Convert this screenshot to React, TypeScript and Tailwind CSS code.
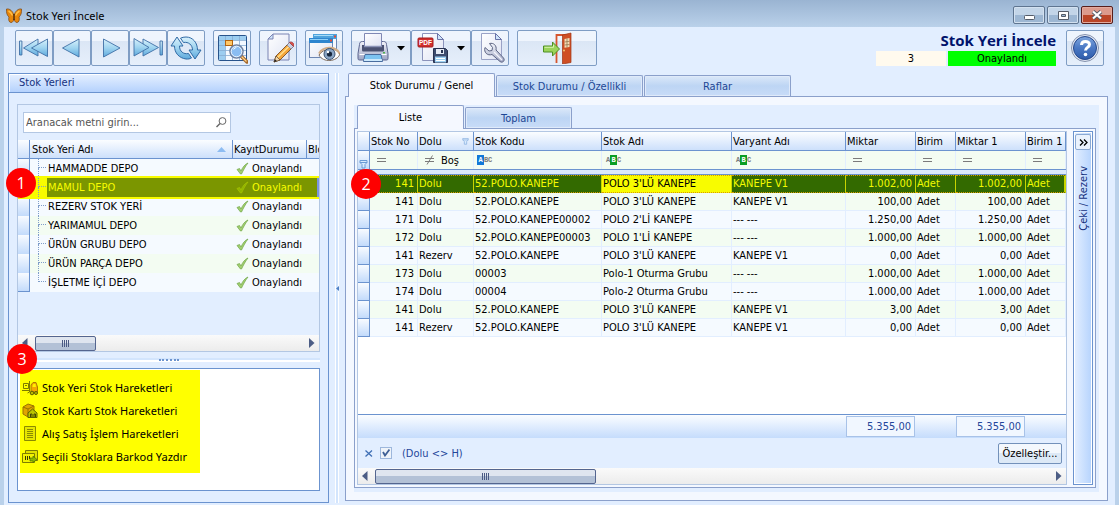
import React, { useState } from 'react';

interface Depot {
  name: string;
  status: string;
}

interface StockRow {
  no: string;
  state: string;
  code: string;
  name: string;
  variant: string;
  qty: string;
}

const depots: Depot[] = [
  { name: 'HAMMADDE DEPO', status: 'Onaylandı' },
  { name: 'MAMUL DEPO', status: 'Onaylandı' },
  { name: 'REZERV STOK YERİ', status: 'Onaylandı' },
  { name: 'YARIMAMUL DEPO', status: 'Onaylandı' },
  { name: 'ÜRÜN GRUBU DEPO', status: 'Onaylandı' },
  { name: 'ÜRÜN PARÇA DEPO', status: 'Onaylandı' },
  { name: 'İŞLETME İÇİ DEPO', status: 'Onaylandı' },
];

const rows: StockRow[] = [
  { no: '141', state: 'Dolu', code: '52.POLO.KANEPE', name: "POLO 3'LÜ KANEPE", variant: 'KANEPE V1', qty: '1.002,00' },
  { no: '141', state: 'Dolu', code: '52.POLO.KANEPE', name: "POLO 3'LÜ KANEPE", variant: 'KANEPE V1', qty: '100,00' },
  { no: '171', state: 'Dolu', code: '52.POLO.KANEPE00002', name: "POLO 2'Lİ KANEPE", variant: '--- ---', qty: '1.250,00' },
  { no: '172', state: 'Dolu', code: '52.POLO.KANEPE00003', name: "POLO 1'Lİ KANEPE", variant: '--- ---', qty: '1.000,00' },
  { no: '141', state: 'Rezerv', code: '52.POLO.KANEPE', name: "POLO 3'LÜ KANEPE", variant: 'KANEPE V1', qty: '0,00' },
  { no: '173', state: 'Dolu', code: '00003', name: 'Polo-1 Oturma Grubu', variant: '--- ---', qty: '1.000,00' },
  { no: '174', state: 'Dolu', code: '00004', name: 'Polo-2 Oturma Grubu', variant: '--- ---', qty: '1.000,00' },
  { no: '141', state: 'Dolu', code: '52.POLO.KANEPE', name: "POLO 3'LÜ KANEPE", variant: 'KANEPE V1', qty: '3,00' },
  { no: '141', state: 'Rezerv', code: '52.POLO.KANEPE', name: "POLO 3'LÜ KANEPE", variant: 'KANEPE V1', qty: '0,00' },
];

/* ---------- toolbar icons ---------- */

const Gradients = () => (
  <svg width="0" height="0" className="absolute">
    <defs>
      <linearGradient id="blue" x1="0" y1="0" x2="0" y2="1">
        <stop offset="0" stopColor="#d9f1fb" />
        <stop offset="0.5" stopColor="#9fd4f0" />
        <stop offset="1" stopColor="#5ea9dc" />
      </linearGradient>
      <linearGradient id="help" x1="0" y1="0" x2="0" y2="1">
        <stop offset="0" stopColor="#7fa6de" />
        <stop offset="0.5" stopColor="#4a78c4" />
        <stop offset="1" stopColor="#2f5cab" />
      </linearGradient>
      <linearGradient id="paper" x1="0" y1="0" x2="1" y2="1">
        <stop offset="0" stopColor="#ffffff" />
        <stop offset="1" stopColor="#dfe3f3" />
      </linearGradient>
      <linearGradient id="metal" x1="0" y1="0" x2="0" y2="1">
        <stop offset="0" stopColor="#f3f4fa" />
        <stop offset="1" stopColor="#9ea5c4" />
      </linearGradient>
    </defs>
  </svg>
);

const FirstIcon = () => (
  <svg width="32" height="32" viewBox="0 0 32 32" fill="url(#blue)" stroke="#3f6fa6" strokeWidth="0.900" strokeLinejoin="round">
    <rect x="1.500" y="9" width="2.400" height="14" />
    <path d="M20 7v17L5.500 16z" />
    <path d="M29.500 7v17.500L13.500 16z" />
  </svg>
);

const PrevIcon = () => (
  <svg width="32" height="32" viewBox="0 0 32 32" fill="url(#blue)" stroke="#3f6fa6" strokeWidth="0.900" strokeLinejoin="round">
    <path d="M23 7v18L6.500 16z" />
  </svg>
);

const NextIcon = () => (
  <svg width="32" height="32" viewBox="0 0 32 32" fill="url(#blue)" stroke="#3f6fa6" strokeWidth="0.900" strokeLinejoin="round">
    <path d="M9.500 7v18L26 16z" />
  </svg>
);

const LastIcon = () => (
  <svg width="32" height="32" viewBox="0 0 32 32" fill="url(#blue)" stroke="#3f6fa6" strokeWidth="0.900" strokeLinejoin="round">
    <rect x="28" y="9" width="2.400" height="14" />
    <path d="M11 7v17l15.500-8.500z" />
    <path d="M2 6.500v17.500L17 15.500z" />
  </svg>
);

const RefreshIcon = () => (
  <svg width="34" height="32" viewBox="0 0 34 32" fill="url(#blue)" stroke="#2f6aa5" strokeLinejoin="round">
    <path d="M8 5L2 14h3.500c0 7 4.500 12 11.500 13 2 .3 4-.2 5.500-1l-3-4.500c-5 1-9-2-9-7.500H14z" />
    <path d="M26 27l6-9h-3.500C28.500 11 24 5 17 5c-2 0-4 .4-5.500 1.200l3 4.300c5-1 9 2.500 9 7.500H20z" />
  </svg>
);

const GridSearchIcon = () => (
  <svg width="32" height="32" viewBox="0 0 32 32">
    <rect x="2.500" y="3.500" width="28" height="25" rx="1" fill="#f4f9ff" stroke="#28548c" />
    <path d="M3 4h27v4H3zM3 8h6v20H3z" fill="#9ccdf0" />
    <path d="M3 8.500h27M3 13.500h27M3 18.500h27M3 23.500h27M9.500 4v24M16.500 4v24M23.500 4v24" stroke="#86acd2" strokeWidth="0.800" />
    <rect x="9.500" y="8.500" width="7" height="5" fill="#ffc766" stroke="#b3650f" />
    <path d="M25 24l6 6" stroke="#a5682a" strokeWidth="3.500" strokeLinecap="round" />
    <path d="M25 24l5.500 5.500" stroke="#ffd28a" strokeWidth="1.200" />
    <circle cx="20.500" cy="19.500" r="6.500" fill="#a8d2f8" stroke="#6e7f9e" strokeWidth="1.500" />
    <circle cx="20.500" cy="19.500" r="5.300" fill="#8abdf2" stroke="#e9f4ff" />
    <path d="M17 18c.5-2 2-3 4-3-1 1-2.500 2-4 3z" fill="#fff" />
  </svg>
);

const EditIcon = () => (
  <svg width="32" height="32" viewBox="0 0 32 32">
    <path d="M11 2h16v26H6V7z" fill="url(#paper)" stroke="#7b84b3" />
    <path d="M11 2v5H6z" fill="#cfe4fa" stroke="#7b84b3" strokeLinejoin="round" />
    <path d="M12 30l2-6L27 11l4 4-13 13z" fill="#f5a53a" stroke="#6b3f14" strokeWidth="0.800" />
    <path d="M15.500 25.500L29 12.500" stroke="#ffe08f" strokeWidth="1.500" />
    <path d="M25 13l2.500-2.500 4 4L29 17z" fill="#c9cfe2" stroke="#6f7796" strokeWidth="0.600" />
    <path d="M27.500 10.500c2-2 6 2 4 4z" fill="#e0524c" stroke="#8e2522" strokeWidth="0.600" />
    <path d="M12 30l2-6 4 4z" fill="#f2d7ac" stroke="#4a3320" strokeWidth="0.600" />
    <path d="M12 30l1-2.800 1.900 1.900z" fill="#222" />
  </svg>
);

const PreviewIcon = () => (
  <svg width="32" height="32" viewBox="0 0 32 32">
    <rect x="5.500" y="2.500" width="23" height="18" fill="#f5f9ff" stroke="#6d86b3" />
    <path d="M5 2h24v5H5z" fill="#4fa3dc" />
    <path d="M6 3.500h19" stroke="#a7dbf8" />
    <rect x="1.500" y="6.500" width="23" height="19" fill="url(#paper)" stroke="#6d86b3" />
    <path d="M1 6h24v5H1z" fill="#2f86cf" />
    <path d="M2 7.500h18" stroke="#8fd0f7" />
    <path d="M26 3.500h2v2h-2zM22 7.500h2v2h-2z" fill="#e64b35" />
    <path d="M11 23c4-7 17-8 21-1-3 8-17 9-21 1z" fill="#fff" stroke="#7c6a5c" />
    <path d="M11 21.500c4-7.500 17-8 20.500 0" fill="none" stroke="#d2ad87" strokeWidth="2" />
    <circle cx="21.500" cy="22" r="5.500" fill="#8aa5c4" stroke="#3c5474" />
    <circle cx="21.500" cy="22" r="2.600" fill="#16263c" />
    <circle cx="20" cy="20" r="1.200" fill="#fff" />
  </svg>
);

const PrintIcon = () => (
  <svg width="32" height="32" viewBox="0 0 32 32">
    <path d="M2.500 12.500c0-2 1-3 3-3h21c2 0 3 1 3 3l1.500 9v5c0 1-.5 1.500-1.500 1.500h-27C1.500 28 1 27.500 1 26.500v-5z" fill="url(#metal)" stroke="#5c658f" />
    <path d="M5 13h22v5c0 1-.5 1.500-1.500 1.500h-19C5.500 19.500 5 19 5 18z" fill="#4b5272" />
    <path d="M7.500 1.500h17v13h-17z" fill="url(#paper)" stroke="#7f88b4" />
    <path d="M7 14.500h18" stroke="#8b93b6" strokeWidth="1.500" />
    <path d="M2.500 22.500h27" stroke="#fff" />
    <path d="M8 22.500h16l1.500 7h-19z" fill="#7cc3f1" stroke="#496d9f" />
    <path d="M7 28h18" stroke="#e8f6ff" strokeWidth="1.500" />
    <rect x="26" y="20" width="2" height="1.500" fill="#4db04d" />
  </svg>
);

const PdfIcon = () => (
  <svg width="32" height="32" viewBox="0 0 32 32">
    <path d="M5.500 1.500h15l6 6v21h-21z" fill="url(#paper)" stroke="#8b93bb" />
    <path d="M20.500 1.500v6h6z" fill="#cfe4fa" stroke="#6a74a8" strokeLinejoin="round" />
    <rect x="1" y="6" width="15" height="9" rx="1" fill="#d22f2c" stroke="#a31d1d" />
    <text x="8.500" y="13" fontSize="6.500" fontWeight="bold" textAnchor="middle" fill="#fff" fontFamily="Liberation Sans, sans-serif">PDF</text>
    <path d="M16.500 16.500h12l2 2v12h-14z" fill="#3d4b6e" stroke="#26314f" />
    <path d="M19 17h8v5h-8z" fill="#e6ebf5" />
    <path d="M24 18h2v3h-2z" fill="#26314f" />
    <path d="M18 24.500h11v6H18z" fill="#9ed0f2" />
    <path d="M19 26.500h9M19 28.500h9" stroke="#fff" />
  </svg>
);

const WrenchIcon = () => (
  <svg width="32" height="32" viewBox="0 0 32 32">
    <path d="M7.500 1.500h14l6 6v20h-20z" fill="url(#paper)" stroke="#9aa2c6" />
    <path d="M21.500 1.500v6h6z" fill="#cfe4fa" stroke="#6a74a8" strokeLinejoin="round" />
    <path
      d="M15.500 11.500c4-1 7.500 2 6.500 6.500l7.500 8c2 2.500-1 5.500-3.500 3.500l-8-7c-4.500 1.500-8.500-2-7-7l4 3.500 3-.5.500-3z"
      fill="url(#metal)"
      stroke="#5b6382"
      strokeLinejoin="round"
    />
    <path d="M20 20l8 8" stroke="#f3f4fa" strokeWidth="1.300" />
  </svg>
);

const ExitIcon = () => (
  <svg width="32" height="32" viewBox="0 0 32 32">
    <path d="M15.500 31V3H27" fill="none" stroke="#d6552e" strokeWidth="1.800" />
    <path d="M21.500 3l8.500-2v29.500L21.500 32z" fill="#cf4f25" stroke="#9f3413" strokeWidth="0.700" />
    <path d="M23.500 7l5-1v9l-5 .8z" fill="#f3dcb6" />
    <path d="M26 6.500v9M23.500 10l5-.7M23.500 13l5-.5" stroke="#8d6a43" strokeWidth="0.700" />
    <circle cx="23" cy="18.500" r="0.900" fill="#f5d37a" />
    <path d="M2.500 14h9v-4l7 7-7 7v-4h-9z" fill="#9ad35a" stroke="#4c8f23" strokeLinejoin="round" />
    <path d="M3.500 15.300h9v-2.500" stroke="#d7f3b0" fill="none" />
  </svg>
);

const HelpIcon = () => (
  <svg width="30" height="30" viewBox="0 0 30 30">
    <circle cx="15" cy="15" r="13.500" fill="#e3e9f4" stroke="#8592ae" />
    <circle cx="15" cy="15" r="11.500" fill="url(#help)" stroke="#27498c" />
    <path d="M11.500 12c0-5 8-4.500 8-.5 0 3-4 2.800-4 6" fill="none" stroke="#fff" strokeWidth="3" />
    <circle cx="15.500" cy="21.500" r="1.800" fill="#fff" />
  </svg>
);

const ButterflyIcon = () => (
  <svg width="16" height="16" viewBox="0 0 16 16">
    <path d="M.5 1C4 .5 6.500 3 8 7 9.500 3 12 .5 15.500 1c.3 3.500-.5 6.500-2.500 8 .8 2.500 0 5.500-2 5.500S8.500 12.500 8 11c-.5 1.500-1 3.500-3 3.500s-2.800-3-2-5.500C1 7.500.2 4.500.5 1z" fill="#e8860c" stroke="#7a4310" strokeWidth="0.700" />
    <path d="M2.500 3c2 1 3 2.500 4 4.500M13.500 3c-2 1-3 2.500-4 4.500" stroke="#ffc04a" strokeWidth="1.500" fill="none" />
    <path d="M8 6v6" stroke="#3b2110" strokeWidth="1.300" />
  </svg>
);

/* ---------- small glyphs ---------- */

const CheckMark = ({ muted }: { muted?: boolean }) => (
  <svg width="13" height="13" viewBox="0 0 13 13" className="shrink-0">
    <path
      d="M1 7.500l2.500-1 1.500 2.500C6.500 5.500 9 2 12 1 9.500 4 7.500 8 5.500 12h-1z"
      fill={muted ? '#8fb400' : '#a3d070'}
      stroke={muted ? '#a9c400' : '#6fa548'}
      strokeWidth="0.700"
    />
  </svg>
);

const Funnel = ({ className }: { className?: string }) => (
  <svg width="9" height="9" viewBox="0 0 9 9" className={className}>
    <path d="M1 .5h7v2l-2 2v3.500H3V4.500l-2-2z" fill="#d6ebff" stroke="#6a9bd6" />
    <path d="M1 2.500h7" stroke="#6a9bd6" />
  </svg>
);

const AbcIcon = ({ active }: { active: 0 | 1 }) => (
  <span className="flex font-['Liberation_Mono',monospace] text-[7px] leading-[10px] font-bold text-[#7b7b7b]">
    {['A', 'B', 'C'].map((c, i) => (
      <span
        key={c}
        className={`text-center ${i === active ? (active === 0 ? 'w-[7px] bg-[#1279d8] text-white' : 'w-[7px] bg-[#0a9e22] text-white') : 'w-1'}`}
      >
        {c}
      </span>
    ))}
  </span>
);

const EqIcon = ({ not }: { not?: boolean }) => (
  <svg width="10" height="10" viewBox="0 0 10 10">
    <path d="M0 3.500h9M0 6.500h9" stroke="#7b7b7b" />
    {not && <path d="M2 9.500L7.500.5" stroke="#7b7b7b" />}
  </svg>
);

const Arrow = ({ left }: { left?: boolean }) => (
  <svg width="6" height="10" viewBox="0 0 6 10">
    <path d={left ? 'M5.500 0v10L0 5z' : 'M0 0v10l5.500-5z'} fill="#4c5d85" />
  </svg>
);

const Badge = ({ n, className }: { n: number; className: string }) => (
  <span className={`absolute z-20 flex size-[30px] items-center justify-center rounded-full bg-[#fe0000] font-['Open_Sans',sans-serif] text-base text-white ${className}`}>
    {n}
  </span>
);

/* ---------- link icons ---------- */

const ForkliftIcon = () => (
  <svg width="16" height="16" viewBox="0 0 16 16" fill="none">
    <path d="M1.500 3.500h5v5h-5zM3 5.500h2M0 10.500h7M7.500 1v11l-2 1" stroke="#7d7a00" />
    <path d="M9 12V5l2-2.500h3L15.500 7v5z" fill="#f5a800" stroke="#b07c00" />
    <path d="M10.500 6l1-2h2l.5 3h-3.500z" fill="#fff200" />
    <circle cx="10" cy="13" r="1.800" fill="#b8b800" stroke="#5e5d00" />
    <circle cx="14" cy="13" r="1.500" fill="#b8b800" stroke="#5e5d00" />
  </svg>
);

const BoxIcon = () => (
  <svg width="16" height="16" viewBox="0 0 16 16">
    <path d="M1 4l5-3 6 2v7l-6 4-5-3z" fill="#e0a600" stroke="#9a7400" />
    <path d="M1 4l5 2 6-3M6 6v8" stroke="#9a7400" fill="none" />
    <path d="M6 14.500V10l4.500-4 4.500 4v4.500z" fill="#b9c400" stroke="#5c6400" />
    <path d="M8.500 14v-3h1.500v3M12 14v-3h1.500v3" stroke="#3f4500" fill="none" />
  </svg>
);

const DocIcon = () => (
  <svg width="16" height="16" viewBox="0 0 16 16">
    <path d="M2.500.5h11v14h-11z" fill="#e6e600" stroke="#8a8a00" />
    <path d="M5 3.500h6M5 5.500h6M5 7.500h6M5 9.500h6M5 11.500h6" stroke="#8a8a00" />
  </svg>
);

const BarcodeIcon = () => (
  <svg width="16" height="16" viewBox="0 0 16 16">
    <path d="M3.500 1.500h12v10h-12z" fill="#e0e000" stroke="#7d7d00" />
    <path d="M.5 4.500h12v9H.5z" fill="#f2f200" stroke="#7d7d00" />
    <path d="M3.500 7v4M5.500 7v4M7.500 7v3" stroke="#3a3a00" />
    <path d="M8 9h3V7l4 3.500-4 3V12H8z" fill="#8db600" stroke="#4c7000" strokeWidth="0.700" />
  </svg>
);

const links = [
  { label: 'Stok Yeri Stok Hareketleri', icon: <ForkliftIcon /> },
  { label: 'Stok Kartı Stok Hareketleri', icon: <BoxIcon /> },
  { label: 'Alış Satış İşlem Hareketleri', icon: <DocIcon /> },
  { label: 'Seçili Stoklara Barkod Yazdır', icon: <BarcodeIcon /> },
];

/* ---------- building blocks ---------- */

const ToolButton = ({ label, wide, drop, children }: { label: string; wide?: boolean; drop?: boolean; children: React.ReactNode }) => (
  <button
    aria-label={label}
    className={`flex h-9 items-center justify-center rounded-xs border border-[#7f9dc4] bg-linear-to-b from-[#eff5fd] from-28% via-[#dbe6f5] via-28% to-[#e6effb] hover:to-[#cfe3ff] ${wide ? 'w-20' : drop ? 'w-[60px] gap-1' : 'w-[38px]'}`}
  >
    {children}
    {drop && (
      <svg width="8" height="5" viewBox="0 0 8 5" className="ml-1">
        <path d="M0 0h8L4 4.500z" fill="#000" />
      </svg>
    )}
  </button>
);

const Tab = ({ label, active, className, onClick }: { label: string; active: boolean; className: string; onClick: () => void }) => (
  <button
    role="tab"
    aria-selected={active}
    onClick={onClick}
    className={`rounded-t-xs border border-b-0 border-[#8ba0cb] ${className} ${
      active
        ? 'relative z-10 -mb-px h-6 bg-[#f5f8ff] text-black'
        : 'mb-0 h-[21px] bg-linear-to-b from-[#dbe8f9] from-0% via-[#bdd5f4] via-50% to-[#c8dcf8] text-[#1d4794] inset-ring inset-ring-[#dfeafa]'
    }`}
  >
    {label}
  </button>
);

const ScrollBar = ({ thumb }: { thumb: string }) => (
  <div className="flex h-4 shrink-0 items-center justify-between bg-linear-to-b from-[#fafafa] to-[#ececec] px-1">
    <div className="flex h-full items-center gap-[7px]">
      <Arrow left />
      <div className={`flex h-[15px] items-center justify-center gap-px rounded-xs border border-[#54658f] bg-linear-to-b from-[#dfe5ef] from-50% to-[#b3c1d6] to-50% ${thumb}`}>
        <span className="h-[7px] w-px bg-[#4a5a84]" />
        <span className="h-[7px] w-px bg-[#4a5a84]" />
        <span className="h-[7px] w-px bg-[#4a5a84]" />
        <span className="h-[7px] w-px bg-[#4a5a84]" />
      </div>
    </div>
    <Arrow />
  </div>
);

const GridCols = () => (
  <colgroup>
    <col className="w-[12px]" />
    <col className="w-[48px]" />
    <col className="w-[56px]" />
    <col className="w-[128px]" />
    <col className="w-[130px]" />
    <col className="w-[114px]" />
    <col className="w-[70px]" />
    <col className="w-[40px]" />
    <col className="w-[70px]" />
    <col className="w-[40px]" />
  </colgroup>
);

const headCell = 'border-r border-b border-[#6b93cf] bg-linear-to-b from-[#fbfdff] to-[#cde0fb] p-0 pl-px text-left font-normal whitespace-nowrap';
const gutter = 'border-r border-b border-[#6b93cf] bg-linear-to-b from-[#f8fbff] to-[#c3dbfb] p-0';

/* ---------- left side ---------- */

const DepotPanel = () => {
  const [search, setSearch] = useState('');
  const [selected, setSelected] = useState(1);

  return (
    <section className="flex w-[321px] flex-col border border-[#6b93cf]">
      <h2 className="h-[19px] border-b border-[#6b93cf] bg-linear-to-b from-[#e6f0ff] to-[#b5d2fd] pl-[10px] leading-[18px] text-[#15317e] shadow-[inset_1px_1px_0_#fff]">
        Stok Yerleri
      </h2>

      <div className="flex flex-1 flex-col px-2 pt-[11px] pb-[11px]">
        <div className="relative flex h-[248px] flex-col border border-[#b3c7e3]">
          <Badge n={1} className="top-[63px] -left-3" />
          <div className="relative mt-[7px] mb-[7px] ml-[5px] w-[208px]">
            <input
              aria-label="Aranacak metni girin"
              placeholder="Aranacak metni girin..."
              value={search}
              onChange={e => setSearch(e.target.value)}
              className="block h-[21px] w-full border border-[#b3c7e3] bg-white px-0.5 text-[11px] outline-none placeholder:text-[#555]"
            />
            <svg width="11" height="11" viewBox="0 0 11 11" className="absolute top-[5px] right-1" fill="none" stroke="#666">
              <circle cx="6.500" cy="4" r="3.400" />
              <path d="M4 6.500L.5 10" strokeWidth="1.500" />
            </svg>
          </div>

          <div className="flex-1 overflow-hidden">
            <table className="w-full table-fixed border-separate border-spacing-0">
              <colgroup>
                <col className="w-[12px]" />
                <col className="w-[203px]" />
                <col className="w-[74px]" />
                <col />
              </colgroup>
              <thead>
                <tr className="h-[19px]">
                  <th className={headCell} />
                  <th className={headCell}>
                    <div className="flex items-center justify-between pr-1.5 pl-px">
                      Stok Yeri Adı
                      <svg width="9" height="5" viewBox="0 0 9 5">
                        <path d="M0 5h9L4.500 0z" fill="#8dbcf2" />
                      </svg>
                    </div>
                  </th>
                  <th className={headCell}>KayıtDurumu</th>
                  <th className={`${headCell} overflow-hidden border-r-0`}>Blo</th>
                </tr>
              </thead>
              <tbody>
                {depots.map((d, i) => {
                  const sel = i === selected;
                  const last = i === depots.length - 1;
                  return (
                    <tr
                      key={d.name}
                      onClick={() => setSelected(i)}
                      className={`h-[19px] cursor-default ${
                        sel ? 'relative z-10 bg-[#f8fc00] text-[#f8fc00] outline-2 outline-[#f8fc00]' : i % 2 ? 'bg-[#f3fcf2]' : 'bg-[#f5faff]'
                      }`}
                    >
                      <td className={sel ? 'p-0' : `${gutter} ${last ? '' : 'border-b-0'}`} />
                      <td className="p-0">
                        <div className="flex h-[19px] items-center">
                          <span className="ml-2 flex h-full w-2 flex-col">
                            <span className="h-[9px] border-b border-l border-dotted border-[#7f9dc9]" />
                            <span className={`flex-1 border-dotted border-[#7f9dc9] ${last ? '' : 'border-l'}`} />
                          </span>
                          <span className={`ml-px flex-1 pl-px leading-[19px] ${sel ? 'bg-[#7b9600]' : ''}`}>{d.name}</span>
                        </div>
                      </td>
                      <td className={`p-0 ${sel ? 'bg-[#7b9600]' : ''}`}>
                        <div className="flex items-center gap-[3px] pl-[3px]">
                          <CheckMark muted={sel} />
                          {d.status}
                        </div>
                      </td>
                      <td className={`p-0 ${sel ? 'border-r-2 border-[#7b93e0] bg-[#7b9600]' : ''}`} />
                    </tr>
                  );
                })}
              </tbody>
            </table>
          </div>
          <ScrollBar thumb="w-[61px]" />
        </div>

        <div className="relative flex h-4 items-center justify-center">
          <Badge n={3} className="-top-2 -left-[10px]" />
          <div className="h-1 w-full border-y-2 border-y-[#d3e5fd] border-b-white" />
          <div className="absolute h-0.5 w-5 border-t-2 border-dotted border-[#6b93cf]" />
        </div>

        <div className="flex-1 border border-[#6b93cf] bg-white p-px pl-0.5">
          <ul className="w-[180px] bg-[#ffff00] pt-[6px] pb-[5px] font-['Noto_Sans',sans-serif]">
            {links.map(l => (
              <li key={l.label}>
                <button className="flex h-[23px] items-center gap-1 pl-0.5 whitespace-nowrap">
                  {l.icon}
                  {l.label}
                </button>
              </li>
            ))}
          </ul>
        </div>
      </div>
    </section>
  );
};

/* ---------- right side ---------- */

const StockGrid = () => {
  const [filterOn, setFilterOn] = useState(true);
  const filterCell = 'border-r border-[#e2eeff] bg-[#f3fcf2] p-0';

  return (
    <div className="relative flex flex-1 flex-col border border-[#b3c7e3] bg-white">
      <Badge n={2} className="top-[37px] -left-[7px]" />
      <table className="w-full table-fixed border-separate border-spacing-0">
        <GridCols />
        <thead>
          <tr className="h-[19px]">
            <th className={headCell} />
            <th className={headCell}>Stok No</th>
            <th className={headCell}>
              <div className="flex items-center justify-between pr-1">
                Dolu
                <Funnel className="size-[7px] opacity-70" />
              </div>
            </th>
            <th className={headCell}>Stok Kodu</th>
            <th className={headCell}>Stok Adı</th>
            <th className={headCell}>Varyant Adı</th>
            <th className={headCell}>Miktar</th>
            <th className={headCell}>Birim</th>
            <th className={headCell}>Miktar 1</th>
            <th className={headCell}>Birim 1</th>
          </tr>
          <tr className="h-[18px]">
            <td className="border-r border-[#6b93cf] bg-linear-to-b from-[#f8fbff] to-[#c3dbfb] p-0 pl-px align-bottom">
              <Funnel />
            </td>
            <td className={`${filterCell} pl-[7px]`}><EqIcon /></td>
            <td className={`${filterCell} pl-[7px]`}>
              <div className="flex items-center gap-[6px]">
                <EqIcon not />
                Boş
              </div>
            </td>
            <td className={`${filterCell} pl-[3px]`}><AbcIcon active={0} /></td>
            <td className={`${filterCell} pl-1`}><AbcIcon active={1} /></td>
            <td className={`${filterCell} pl-1`}><AbcIcon active={1} /></td>
            <td className={`${filterCell} pl-[7px]`}><EqIcon /></td>
            <td className={`${filterCell} pl-[7px]`}><EqIcon /></td>
            <td className={`${filterCell} pl-[7px]`}><EqIcon /></td>
            <td className={`${filterCell} pl-[7px]`}><EqIcon /></td>
          </tr>
          <tr className="h-[6px]">
            <td colSpan={10} className="border-y border-[#6b93cf] bg-[#dbe9fd] p-0" />
          </tr>
        </thead>
        <tbody>
          {rows.map((r, i) => {
            const sel = i === 0;
            const cell = `truncate p-0 pr-[3px] pl-px border-r border-b ${
              sel ? 'border-t border-t-[#d99a00] border-b-[#d99a00] [border-top-style:dotted] [border-bottom-style:dotted] border-r-[#c8d400] leading-[16px]' : 'border-[#e2eeff] leading-[17px]'
            }`;
            return (
              <tr key={i} className={`h-[18px] ${sel ? 'bg-[#336a00] text-[#f4fb00]' : i % 2 ? 'bg-[#f3fcf2]' : 'bg-[#f5faff]'}`}>
                <td className={gutter} />
                <td className={`${cell} text-right`}>{r.no}</td>
                <td className={cell}>{r.state}</td>
                <td className={cell}>{r.code}</td>
                <td className={`${cell} ${sel ? 'bg-[#f8fc00] text-black' : ''}`}>{r.name}</td>
                <td className={cell}>{r.variant}</td>
                <td className={`${cell} text-right`}>{r.qty}</td>
                <td className={cell}>Adet</td>
                <td className={`${cell} text-right`}>{r.qty}</td>
                <td className={`${cell} ${sel ? 'border-r-2 border-r-[#2f5cc0]' : ''}`}>Adet</td>
              </tr>
            );
          })}
        </tbody>
      </table>

      <div className="mt-auto border-t border-[#6b93cf] bg-linear-to-b from-[#fbfdff] to-[#c5dcfc] text-[#24469a]">
        <table className="w-full table-fixed border-separate border-spacing-0">
          <GridCols />
          <tbody>
            <tr className="h-[23px]">
              <td colSpan={6} />
              <td className="p-0 pb-px">
                <div className="h-[21px] w-[69px] border border-[#a8c2e8] bg-[#f1f7ff] pr-[3px] text-right leading-5">5.355,00</div>
              </td>
              <td />
              <td className="p-0 pb-px">
                <div className="h-[21px] w-[69px] border border-[#a8c2e8] bg-[#f1f7ff] pr-[3px] text-right leading-5">5.355,00</div>
              </td>
              <td />
            </tr>
          </tbody>
        </table>
      </div>

      <div className="flex h-[30px] items-center bg-[#e2eeff] pr-1 pl-[7px] text-[#24469a]">
        <button aria-label="Filtreyi temizle">
          <svg width="8" height="7" viewBox="0 0 8 7">
            <path d="M.5.5l6.500 6M7 .5l-6.500 6" stroke="#3f6fb5" strokeWidth="1.300" />
          </svg>
        </button>
        <label className="ml-[7px] flex items-center gap-[10px]">
          <span className="relative flex size-3">
            <input
              type="checkbox"
              checked={filterOn}
              onChange={e => setFilterOn(e.target.checked)}
              className="size-3 appearance-none border border-[#9db7dc] bg-[#eef3f9]"
            />
            {filterOn && (
              <svg width="8" height="8" viewBox="0 0 8 8" className="pointer-events-none absolute top-0.5 left-0.5">
                <path d="M1 3l2 3.500L7.500 .5" fill="none" stroke="#3e5f95" strokeWidth="1.800" />
              </svg>
            )}
          </span>
          (Dolu &lt;&gt; H)
        </label>
        <button className="ml-auto h-[21px] w-16 rounded-xs border border-[#7391ba] bg-linear-to-b from-[#f4f8fd] from-50% to-[#dde9f6] to-50% text-black">
          Özelleştir...
        </button>
      </div>
      <ScrollBar thumb="w-[221px]" />
    </div>
  );
};

const StockTabs = () => {
  const [tab, setTab] = useState(0);
  const [inner, setInner] = useState(0);

  return (
    <section className="flex flex-1 flex-col">
      <div role="tablist" className="flex items-end gap-px pl-[3px]">
        {['Stok Durumu / Genel', 'Stok Durumu / Özellikli', 'Raflar'].map((t, i) => (
          <Tab key={t} label={t} active={tab === i} onClick={() => setTab(i)} className="w-[147px]" />
        ))}
      </div>
      <div className="flex flex-1 flex-col border border-[#8ba0cb] bg-[#f4f8ff] p-2">
        <div className="flex flex-1 flex-col bg-[#e2eeff] pr-[3px] pb-1">
          <div role="tablist" className="flex items-end gap-px pl-[3px]">
            {['Liste', 'Toplam'].map((t, i) => (
              <Tab key={t} label={t} active={inner === i} onClick={() => setInner(i)} className="w-[107px]" />
            ))}
          </div>
          <div className="flex flex-1 gap-1.5 border border-[#8ba0cb] bg-[#f4f8ff] p-0.5">
            <StockGrid />
            <aside className="flex w-[20px] flex-col items-center gap-4 border border-[#6b93cf] bg-linear-to-r from-[#e4efff] to-[#b5d3fd] pt-0.5 inset-ring inset-ring-white">
              <button aria-label="Genişlet" className="flex size-4 items-center justify-center rounded-xs border border-[#8ba9d3] bg-[#eaf2fd]">
                <svg width="9" height="7" viewBox="0 0 9 7" fill="none" stroke="#000" strokeWidth="1.300">
                  <path d="M1 .5l3 3-3 3M5 .5l3 3-3 3" />
                </svg>
              </button>
              <span className="rotate-180 text-[#15317e] [writing-mode:vertical-rl]">Çeki / Rezerv</span>
            </aside>
          </div>
        </div>
      </div>
    </section>
  );
};

const App: React.FC = () => {
  return (
    <div className="flex min-h-screen flex-col bg-[#bad1ea] font-['DejaVu_Sans_Condensed','DejaVu_Sans',sans-serif] text-[11px] leading-[15px] text-black">
      <Gradients />

      {/* Title bar */}
      <header className="flex h-[27px] items-start bg-linear-to-b from-[#9ab4d2] to-[#bad1ea] pr-1.5 pl-1.5">
        <div className="flex items-center gap-1 pt-[7px]">
          <ButterflyIcon />
          <h1 className="font-['Noto_Sans',sans-serif] leading-[17px]">Stok Yeri İncele</h1>
        </div>
        <div className="ml-auto flex gap-0.5 pt-1.5">
          <button aria-label="Küçült" className="flex h-[18px] w-8 items-center justify-center rounded-xs border border-[#5f7590] bg-linear-to-b from-[#c3d5e8] from-50% to-[#9db7d3] to-50% inset-ring inset-ring-[#d3e1f0]">
            <svg width="11" height="6" viewBox="0 0 11 6" className="mt-1">
              <rect x="0.500" y="1.500" width="10" height="4" rx="1" fill="#fff" stroke="#555c68" />
            </svg>
          </button>
          <button aria-label="Ekranı kapla" className="flex h-[18px] w-8 items-center justify-center rounded-xs border border-[#5f7590] bg-linear-to-b from-[#c3d5e8] from-50% to-[#9db7d3] to-50% inset-ring inset-ring-[#d3e1f0]">
            <svg width="11" height="9" viewBox="0 0 11 9">
              <path d="M.5.5h10v8H.5zM3.500 3.500v2h4v-2z" fill="#fff" fillRule="evenodd" stroke="#555c68" />
            </svg>
          </button>
          <button aria-label="Kapat" className="flex h-[18px] w-8 items-center justify-center rounded-xs border border-[#571d1a] bg-linear-to-b from-[#dc9a8c] from-50% to-[#bb4527] to-50% inset-ring inset-ring-[#e2ab9f]">
            <svg width="12" height="10" viewBox="0 0 12 10">
              <path d="M2 1.500l8 7M10 1.500l-8 7" stroke="#555c68" strokeWidth="4" />
              <path d="M2 1.500l8 7M10 1.500l-8 7" stroke="#fff" strokeWidth="2.200" />
            </svg>
          </button>
        </div>
      </header>

      <main className="mx-1 flex flex-1 flex-col bg-[#e2eeff]">
        {/* Toolbar */}
        <div className="flex gap-2 pt-[3px] pr-[11px] pb-[7px] pl-[11px]">
          <div className="flex">
            <ToolButton label="İlk"><FirstIcon /></ToolButton>
            <ToolButton label="Önceki"><PrevIcon /></ToolButton>
            <ToolButton label="Sonraki"><NextIcon /></ToolButton>
            <ToolButton label="Son"><LastIcon /></ToolButton>
            <ToolButton label="Yenile"><RefreshIcon /></ToolButton>
          </div>
          <ToolButton label="Ara"><GridSearchIcon /></ToolButton>
          <ToolButton label="Düzenle"><EditIcon /></ToolButton>
          <ToolButton label="İncele"><PreviewIcon /></ToolButton>
          <div className="flex">
            <ToolButton label="Yazdır" drop><PrintIcon /></ToolButton>
            <ToolButton label="PDF kaydet" drop><PdfIcon /></ToolButton>
            <ToolButton label="Ayarlar"><WrenchIcon /></ToolButton>
          </div>
          <ToolButton label="Çıkış" wide><ExitIcon /></ToolButton>

          <div className="ml-auto flex gap-[10px]">
            <div className="flex flex-col items-end">
              <div className="h-[21px] font-['Open_Sans',sans-serif] text-[15px] leading-[21px] font-bold text-[#00126b]">Stok Yeri İncele</div>
              <div className="flex gap-0.5 text-center">
                <span className="w-[70px] bg-[#fffaee]">3</span>
                <span className="w-[108px] bg-[#00ff00]">Onaylandı</span>
              </div>
            </div>
            <ToolButton label="Yardım"><HelpIcon /></ToolButton>
          </div>
        </div>

        {/* Panels */}
        <div className="flex flex-1 pr-[7px] pb-0.5 pl-1">
          <DepotPanel />
          <div className="mr-[6px] ml-[6px] flex w-1 items-center border-x border-x-white bg-[#d3e5fd]">
            <svg width="3" height="5" viewBox="0 0 3 5" className="shrink-0">
              <path d="M3 0v5L0 2.500z" fill="#4f80c4" />
            </svg>
          </div>
          <div className="flex flex-1 pb-0.5">
            <StockTabs />
          </div>
        </div>
      </main>
    </div>
  );
};

export default App;
